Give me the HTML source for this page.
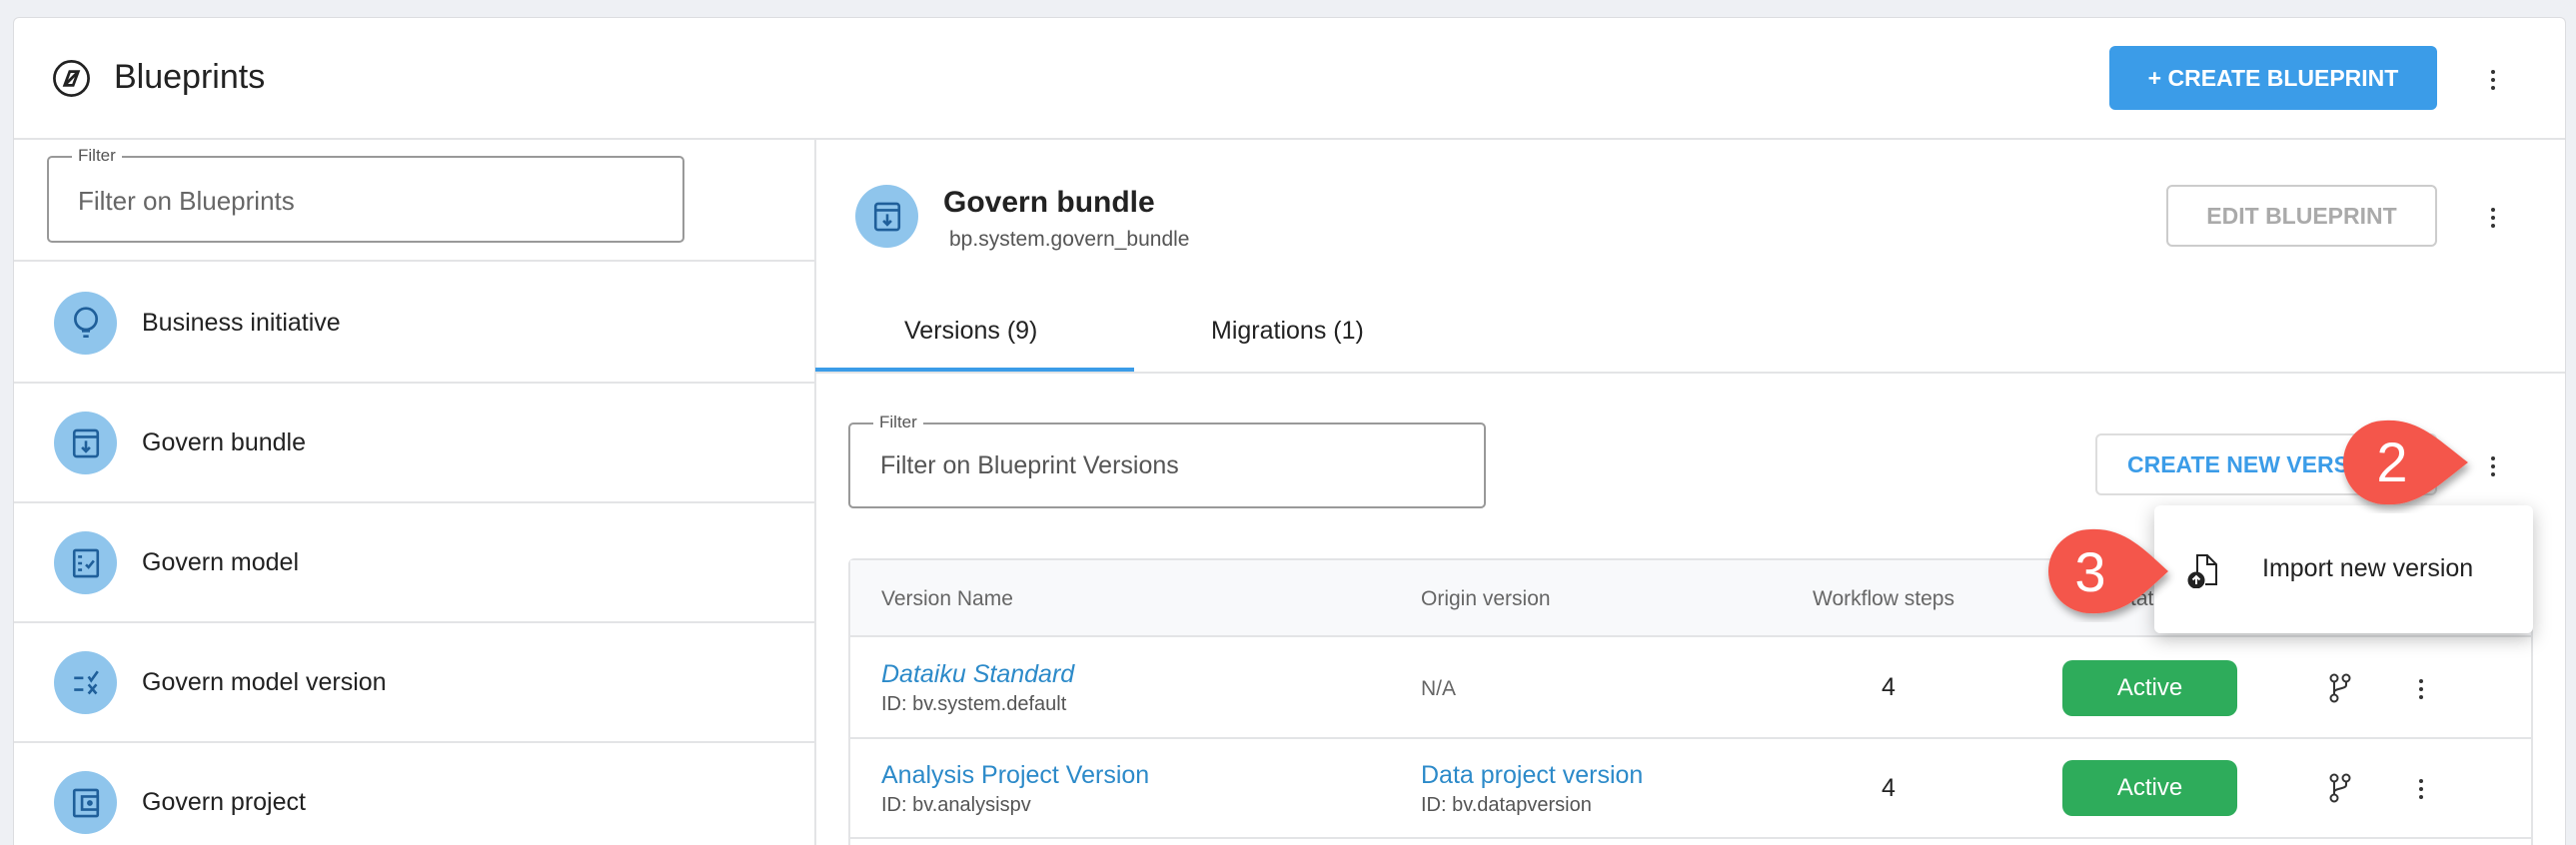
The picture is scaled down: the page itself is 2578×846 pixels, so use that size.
<!DOCTYPE html>
<html style="width:2578px;height:846px;overflow:hidden"><head><meta charset="utf-8"><style>
*{box-sizing:border-box;margin:0;padding:0}
body{width:2578px;height:846px;background:#eef0f4;font-family:"Liberation Sans",sans-serif;color:#222;position:relative;overflow:hidden}
.a{position:absolute}
.card{left:13px;top:17px;width:2555px;height:829px;background:#fff;border:1px solid #dcdde0;border-bottom:none;border-radius:6px 6px 0 0}
.hl{height:2px;background:#e3e4e6}
.circ{width:63px;height:63px;border-radius:50%;background:#8fc5ec}
.side{font-size:25px;color:#222}
.kebab{width:5px}
.kebab i{display:block;width:4px;height:4px;border-radius:50%;background:#333;margin:0 0 4px 0}
.th{font-size:21px;color:#666}
.blue{color:#2c8ac9}
.id{font-size:20px;color:#555}
.act{background:#2eac5b;color:#fff;font-size:24px;border-radius:10px;width:175px;height:56px;text-align:center;line-height:56px}
</style></head><body>
<div class="a card"></div>
<svg class="a" style="left:51px;top:58px" width="41" height="41" viewBox="0 0 24 24" fill="none" stroke="#222" stroke-width="1.6"><circle cx="12" cy="12" r="10"/><path d="M8 16l3-8 5-0-3 8z" /><path d="M9 15l6-6"/></svg>
<div class="a" style="left:114px;top:58px;font-size:34px">Blueprints</div>
<div class="a" style="left:2111px;top:46px;width:328px;height:64px;background:#3b9ce8;border-radius:6px;color:#fff;font-weight:bold;font-size:23px;text-align:center;line-height:64px">+ CREATE BLUEPRINT</div>
<div class="a kebab" style="left:2493px;top:70px"><i></i><i></i><i></i></div>
<div class="a hl" style="left:14px;top:138px;width:2553px"></div>
<div class="a" style="left:815px;top:139px;width:2px;height:710px;background:#e3e4e6"></div>
<div class="a" style="left:47px;top:156px;width:638px;height:87px;border:2px solid #999;border-radius:5px"></div>
<div class="a" style="left:72px;top:146px;background:#fff;padding:0 6px;font-size:17px;color:#555">Filter</div>
<div class="a" style="left:78px;top:186px;font-size:26px;color:#666">Filter on Blueprints</div>
<div class="a hl" style="left:14px;top:260px;width:801px"></div>
<div class="a hl" style="left:14px;top:382px;width:801px"></div>
<div class="a hl" style="left:14px;top:502px;width:801px"></div>
<div class="a hl" style="left:14px;top:622px;width:801px"></div>
<div class="a hl" style="left:14px;top:742px;width:801px"></div>
<div class="a circ" style="left:54px;top:292px"></div>
<div class="a circ" style="left:54px;top:412px"></div>
<div class="a circ" style="left:54px;top:532px"></div>
<div class="a circ" style="left:54px;top:652px"></div>
<div class="a circ" style="left:54px;top:772px"></div>
<svg class="a" style="left:70px;top:306px" width="32" height="36" viewBox="0 0 24 27" fill="none" stroke="#1f5f9a" stroke-width="2"><circle cx="12" cy="10" r="8"/><path d="M9 19h6M10 23h4"/></svg>
<svg class="a" style="left:70px;top:427px" width="32" height="34" viewBox="0 0 24 26" fill="none" stroke="#1f5f9a" stroke-width="2"><rect x="3" y="3" width="18" height="20" rx="2"/><path d="M3 8h18M12 11v8M9 16l3 3 3-3"/></svg>
<svg class="a" style="left:70px;top:547px" width="32" height="34" viewBox="0 0 24 26" fill="none" stroke="#1f5f9a" stroke-width="2"><rect x="3" y="3" width="18" height="20" rx="1"/><path d="M6 8h3M6 13h3M6 18h3M12 14l2 2 4-5"/></svg>
<svg class="a" style="left:70px;top:667px" width="32" height="34" viewBox="0 0 24 26" fill="none" stroke="#1f5f9a" stroke-width="2"><path d="M3 9h7M3 18h7M14 8l2 3 5-7M14 14l6 7M20 14l-6 7"/></svg>
<svg class="a" style="left:70px;top:787px" width="32" height="34" viewBox="0 0 24 26" fill="none" stroke="#1f5f9a" stroke-width="2"><rect x="3" y="3" width="18" height="20" rx="1"/><rect x="9" y="8" width="12" height="10"/><circle cx="15" cy="13" r="1.2"/></svg>
<div class="a side" style="left:142px;top:309px">Business initiative</div>
<div class="a side" style="left:142px;top:429px">Govern bundle</div>
<div class="a side" style="left:142px;top:549px">Govern model</div>
<div class="a side" style="left:142px;top:669px">Govern model version</div>
<div class="a side" style="left:142px;top:789px">Govern project</div>
<div class="a circ" style="left:856px;top:185px"></div>
<svg class="a" style="left:872px;top:200px" width="32" height="34" viewBox="0 0 24 26" fill="none" stroke="#1f5f9a" stroke-width="2"><rect x="3" y="3" width="18" height="20" rx="2"/><path d="M3 8h18M12 11v8M9 16l3 3 3-3"/></svg>
<div class="a" style="left:944px;top:186px;font-size:30px;font-weight:bold;color:#222">Govern bundle</div>
<div class="a" style="left:950px;top:228px;font-size:21px;color:#555">bp.system.govern_bundle</div>
<div class="a" style="left:2168px;top:185px;width:271px;height:62px;border:2px solid #ccc;border-radius:6px;color:#aaa;font-weight:bold;font-size:23px;text-align:center;line-height:58px">EDIT BLUEPRINT</div>
<div class="a kebab" style="left:2493px;top:208px"><i></i><i></i><i></i></div>
<div class="a" style="left:905px;top:317px;font-size:25px">Versions (9)</div>
<div class="a" style="left:1212px;top:317px;font-size:25px">Migrations (1)</div>
<div class="a" style="left:816px;top:368px;width:319px;height:4px;background:#3b9ce8"></div>
<div class="a hl" style="left:816px;top:372px;width:1751px"></div>
<div class="a" style="left:849px;top:423px;width:638px;height:86px;border:2px solid #999;border-radius:5px"></div>
<div class="a" style="left:874px;top:413px;background:#fff;padding:0 6px;font-size:17px;color:#555">Filter</div>
<div class="a" style="left:881px;top:452px;font-size:25px;color:#555">Filter on Blueprint Versions</div>
<div class="a" style="left:2097px;top:434px;width:342px;height:62px;border:2px solid #ddd;border-radius:6px;color:#3b9ce8;font-weight:bold;font-size:23px;line-height:58px;padding-left:30px">CREATE NEW VERSION</div>
<div class="a kebab" style="left:2493px;top:457px"><i></i><i></i><i></i></div>
<div class="a" style="left:849px;top:559px;width:1686px;height:300px;border:2px solid #e3e4e6;border-radius:6px 6px 0 0"></div>
<div class="a" style="left:851px;top:561px;width:1682px;height:77px;background:#f8f9fb;border-bottom:2px solid #e3e4e6"></div>
<div class="a th" style="left:882px;top:588px">Version Name</div>
<div class="a th" style="left:1422px;top:588px">Origin version</div>
<div class="a th" style="left:1814px;top:588px">Workflow steps</div>
<div class="a th" style="left:2118px;top:588px">Status</div>
<div class="a" style="left:882px;top:661px;font-size:25px;font-style:italic"><span class="blue">Dataiku Standard</span></div>
<div class="a id" style="left:882px;top:694px">ID: bv.system.default</div>
<div class="a th" style="left:1422px;top:678px">N/A</div>
<div class="a" style="left:1883px;top:674px;font-size:25px">4</div>
<div class="a act" style="left:2064px;top:661px">Active</div>
<div class="a hl" style="left:851px;top:738px;width:1682px"></div>
<div class="a blue" style="left:882px;top:762px;font-size:25px">Analysis Project Version</div>
<div class="a id" style="left:882px;top:795px">ID: bv.analysispv</div>
<div class="a blue" style="left:1422px;top:762px;font-size:25px">Data project version</div>
<div class="a id" style="left:1422px;top:795px">ID: bv.datapversion</div>
<div class="a" style="left:1883px;top:775px;font-size:25px">4</div>
<div class="a act" style="left:2064px;top:761px">Active</div>
<div class="a hl" style="left:851px;top:838px;width:1682px"></div>
<svg class="a" style="left:2331px;top:674px" width="24" height="30" viewBox="0 0 24 30" fill="none" stroke="#333" stroke-width="2"><circle cx="5" cy="5" r="3.5"/><circle cx="17" cy="5" r="3.5"/><circle cx="5" cy="25" r="3.5"/><path d="M5 9v12M17 9v3c0 4-12 3-12 7"/></svg>
<svg class="a" style="left:2331px;top:774px" width="24" height="30" viewBox="0 0 24 30" fill="none" stroke="#333" stroke-width="2"><circle cx="5" cy="5" r="3.5"/><circle cx="17" cy="5" r="3.5"/><circle cx="5" cy="25" r="3.5"/><path d="M5 9v12M17 9v3c0 4-12 3-12 7"/></svg>
<div class="a kebab" style="left:2421px;top:680px"><i></i><i></i><i></i></div>
<div class="a kebab" style="left:2421px;top:780px"><i></i><i></i><i></i></div>
<div class="a" style="left:2156px;top:506px;width:379px;height:128px;background:#fff;border-radius:6px;box-shadow:0 6px 18px rgba(0,0,0,.25)"></div>
<svg class="a" style="left:2189px;top:553px" width="32" height="36" viewBox="0 0 32 36" fill="none" stroke="#222" stroke-width="2"><path d="M10 22V3h10l9 9v20h-11"/><path d="M20 3v9h9"/><circle cx="9" cy="28" r="7.5" fill="#222"/><path d="M9 32v-8M5.5 27.5L9 24l3.5 3.5" stroke="#fff"/></svg>
<div class="a" style="left:2264px;top:555px;font-size:25px;color:#222">Import new version</div>
<svg class="a" style="left:2330px;top:410px" width="160" height="110" viewBox="0 0 160 110"><defs><filter id="s"><feDropShadow dx="2" dy="5" stdDeviation="4" flood-opacity=".35"/></filter></defs><path d="M57 11 C90 9 110 30 140 53 C110 76 90 97 57 95 A42 42 0 0 1 57 11Z" fill="#f4574b" filter="url(#s)"/><text x="64" y="72" font-family="Liberation Sans" font-size="56" fill="#fff" text-anchor="middle">2</text></svg>
<svg class="a" style="left:2030px;top:519px" width="160" height="110" viewBox="0 0 160 110"><path d="M62 11 C95 9 115 30 140 53 C115 76 95 97 62 95 A42 42 0 0 1 62 11Z" fill="#f4574b" filter="url(#s)"/><text x="62" y="73" font-family="Liberation Sans" font-size="56" fill="#fff" text-anchor="middle">3</text></svg>
</body></html>
